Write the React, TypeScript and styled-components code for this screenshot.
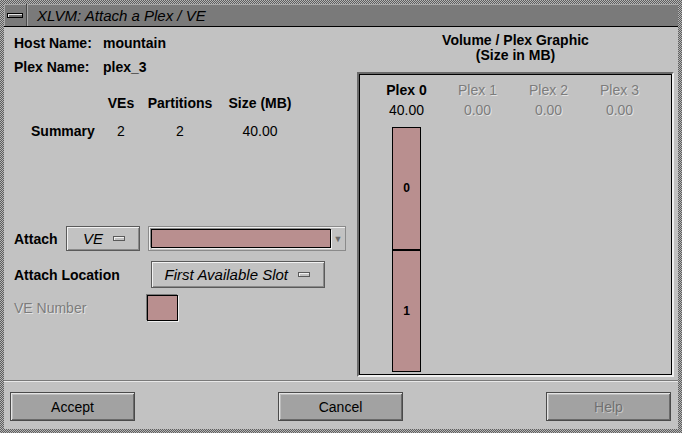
import React from "react";
import styled, { createGlobalStyle } from "styled-components";

const Global = createGlobalStyle`
  html, body { margin: 0; padding: 0; background: #c2c2c2; }
  * { box-sizing: border-box; }
`;

const FONT = `"Liberation Sans", Arial, Helvetica, sans-serif`;
const BG = "#c2c2c2";
const PINK = "#b98f8f";
const DIM = "#7c7c7c";
const DIM_SHADOW = "1px 1px 0 #e2e2e2";

const Frame = styled.div`
  width: 682px;
  height: 433px;
  padding: 4px;
  display: flex;
  flex-direction: column;
  background: repeating-conic-gradient(#5e5e5e 0 25%, #b4b4b4 0 50%) 0 0 / 2px 2px;
  font-family: ${FONT};
`;

const TitleBar = styled.div`
  height: 23px;
  display: flex;
  background: #7a7a7a;
  border-bottom: 1px solid #000;
`;

const MenuButton = styled.div`
  width: 23px;
  display: flex;
  align-items: center;
  justify-content: center;
  border-right: 1px solid #4a4a4a;
  box-shadow: inset 1px 1px 0 #a8a8a8;
`;

const MenuBar = styled.div`
  width: 16px;
  height: 5px;
  background: #6c6c6c;
  border: 1px solid #000;
  box-shadow: inset 1px 1px 0 #e6e6e6;
`;

const TitleText = styled.div`
  flex: 1;
  display: flex;
  align-items: center;
  padding-left: 10px;
  font-size: 15px;
  font-style: italic;
  color: #000;
  box-shadow: inset 1px 1px 0 #a8a8a8;
`;

const Content = styled.div`
  flex: 1;
  display: flex;
  flex-direction: column;
  background: ${BG};
`;

const Main = styled.div`
  height: 353px;
  display: flex;
`;

const LeftPane = styled.div`
  width: 353px;
  padding: 4px 0 0 10px;
  display: flex;
  flex-direction: column;
`;

const InfoRow = styled.div`
  height: 24px;
  display: flex;
  align-items: center;
  font-size: 14px;
  font-weight: bold;
  color: #000;
`;

const InfoLabel = styled.span`
  width: 89px;
`;

const Table = styled.div`
  margin: 12px 0 0 17px;
  display: grid;
  grid-template-columns: 72px 36px 82px 78px;
  grid-auto-rows: 24px;
  row-gap: 4px;
  align-items: center;
  font-size: 14px;
  color: #000;
`;

const Cell = styled.div<{ $bold?: boolean; $left?: boolean }>`
  font-weight: ${(p) => (p.$bold ? "bold" : "normal")};
  text-align: ${(p) => (p.$left ? "left" : "center")};
  white-space: nowrap;
`;

const FormRow = styled.div<{ $top: number; $h: number }>`
  margin-top: ${(p) => p.$top}px;
  height: ${(p) => p.$h}px;
  display: flex;
  align-items: center;
`;

const FormLabel = styled.div<{ $w: number; $disabled?: boolean }>`
  width: ${(p) => p.$w}px;
  font-size: 14px;
  font-weight: ${(p) => (p.$disabled ? "normal" : "bold")};
  color: ${(p) => (p.$disabled ? DIM : "#000")};
  text-shadow: ${(p) => (p.$disabled ? DIM_SHADOW : "none")};
  white-space: nowrap;
`;

const OptionButton = styled.div<{ $w: number }>`
  width: ${(p) => p.$w}px;
  height: 100%;
  display: flex;
  align-items: center;
  justify-content: flex-end;
  gap: 10px;
  padding-right: 14px;
  background: ${BG};
  border: 1px solid #5a5a5a;
  box-shadow: inset 1px 1px 0 #f2f2f2, inset -1px -1px 0 #8a8a8a;
  font-size: 15px;
  font-style: italic;
  color: #000;
  white-space: nowrap;
`;

const Indicator = styled.span`
  width: 12px;
  height: 5px;
  background: ${BG};
  border: 1px solid #5a5a5a;
  box-shadow: inset 1px 1px 0 #f2f2f2;
`;

const Combo = styled.div`
  margin-left: 8px;
  width: 198px;
  height: 100%;
  display: flex;
  align-items: center;
  padding: 2px 0 2px 2px;
  border: 1px solid #8a8a8a;
  box-shadow: inset 1px 1px 0 #f0f0f0;
`;

const PinkField = styled.div`
  width: 180px;
  height: 100%;
  background: ${PINK};
  border: 1px solid #000;
  box-shadow: 1px 1px 0 #f0f0f0, -1px -1px 0 #8a8a8a;
`;

const ComboArrow = styled.div`
  flex: 1;
  display: flex;
  justify-content: center;
  font-size: 9px;
  color: #6a6a6a;
`;

const PinkSquare = styled.div`
  width: 31px;
  height: 26px;
  background: ${PINK};
  border: 1px solid #000;
  box-shadow: 1px 1px 0 #f0f0f0, -1px -1px 0 #7a7a7a;
`;

const RightPane = styled.div`
  flex: 1;
  padding: 6px 4px 3px 0;
  display: flex;
  flex-direction: column;
`;

const GraphTitle = styled.div`
  text-align: center;
  font-size: 14px;
  font-weight: bold;
  line-height: 15px;
  color: #000;
`;

const GraphPanel = styled.div`
  margin-top: 9px;
  flex: 1;
  border: 2px solid;
  border-color: #6a6a6a #f0f0f0 #f0f0f0 #6a6a6a;
  box-shadow: inset 1px 1px 0 #000, inset -1px -1px 0 #000;
  padding: 8px 0 0 12px;
  display: flex;
`;

const PlexColumn = styled.div`
  width: 71px;
  display: flex;
  flex-direction: column;
  align-items: center;
`;

const PlexLabel = styled.div<{ $active?: boolean; $bold?: boolean }>`
  height: 16px;
  line-height: 16px;
  font-size: 14px;
  font-weight: ${(p) => (p.$bold && p.$active ? "bold" : "normal")};
  color: ${(p) => (p.$active ? "#000" : DIM)};
  text-shadow: ${(p) => (p.$active ? "none" : DIM_SHADOW)};
  & + & {
    margin-top: 4px;
  }
`;

const Bar = styled.div`
  margin-top: 9px;
  width: 29px;
  height: 245px;
  display: flex;
  flex-direction: column;
  border: 1px solid #000;
  background: ${PINK};
`;

const Segment = styled.div`
  flex: 1;
  display: flex;
  align-items: center;
  justify-content: center;
  font-size: 12px;
  font-weight: bold;
  color: #000;
  & + & {
    border-top: 2px solid #000;
  }
`;

const Separator = styled.div`
  height: 2px;
  border-top: 1px solid #7a7a7a;
  border-bottom: 1px solid #e8e8e8;
`;

const ButtonBar = styled.div`
  flex: 1;
  display: flex;
  justify-content: space-between;
  align-items: flex-start;
  padding: 10px 7px 0 6px;
`;

const PushButton = styled.div<{ $disabled?: boolean }>`
  width: 125px;
  height: 29px;
  display: flex;
  align-items: center;
  justify-content: center;
  background: #a2a2a2;
  border: 1px solid #4a4a4a;
  box-shadow: inset 1px 1px 0 #e4e4e4, inset -1px -1px 0 #6a6a6a, inset 2px 2px 0 #bcbcbc;
  font-size: 14px;
  color: ${(p) => (p.$disabled ? "#707070" : "#000")};
  text-shadow: ${(p) => (p.$disabled ? "1px 1px 0 #c8c8c8" : "none")};
`;

const plexes = [
  { name: "Plex 0", size: "40.00", active: true },
  { name: "Plex 1", size: "0.00", active: false },
  { name: "Plex 2", size: "0.00", active: false },
  { name: "Plex 3", size: "0.00", active: false },
];

export default function App() {
  return (
    <>
      <Global />
      <Frame>
        <TitleBar>
          <MenuButton>
            <MenuBar />
          </MenuButton>
          <TitleText>XLVM: Attach a Plex / VE</TitleText>
        </TitleBar>
        <Content>
          <Main>
            <LeftPane>
              <InfoRow>
                <InfoLabel>Host Name:</InfoLabel>
                <span>mountain</span>
              </InfoRow>
              <InfoRow>
                <InfoLabel>Plex Name:</InfoLabel>
                <span>plex_3</span>
              </InfoRow>
              <Table>
                <Cell />
                <Cell $bold>VEs</Cell>
                <Cell $bold>Partitions</Cell>
                <Cell $bold>Size (MB)</Cell>
                <Cell $bold $left>Summary</Cell>
                <Cell>2</Cell>
                <Cell>2</Cell>
                <Cell>40.00</Cell>
              </Table>
              <FormRow $top={83} $h={25}>
                <FormLabel $w={52}>Attach</FormLabel>
                <OptionButton $w={74}>
                  VE <Indicator />
                </OptionButton>
                <Combo>
                  <PinkField />
                  <ComboArrow>▼</ComboArrow>
                </Combo>
              </FormRow>
              <FormRow $top={10} $h={27}>
                <FormLabel $w={137}>Attach Location</FormLabel>
                <OptionButton $w={174}>
                  First Available Slot <Indicator />
                </OptionButton>
              </FormRow>
              <FormRow $top={7} $h={26}>
                <FormLabel $w={133} $disabled>
                  VE Number
                </FormLabel>
                <PinkSquare />
              </FormRow>
            </LeftPane>
            <RightPane>
              <GraphTitle>
                Volume / Plex Graphic
                <br />
                (Size in MB)
              </GraphTitle>
              <GraphPanel>
                {plexes.map((p) => (
                  <PlexColumn key={p.name}>
                    <PlexLabel $active={p.active} $bold>
                      {p.name}
                    </PlexLabel>
                    <PlexLabel $active={p.active}>{p.size}</PlexLabel>
                    {p.active && (
                      <Bar>
                        <Segment>0</Segment>
                        <Segment>1</Segment>
                      </Bar>
                    )}
                  </PlexColumn>
                ))}
              </GraphPanel>
            </RightPane>
          </Main>
          <Separator />
          <ButtonBar>
            <PushButton>Accept</PushButton>
            <PushButton>Cancel</PushButton>
            <PushButton $disabled>Help</PushButton>
          </ButtonBar>
        </Content>
      </Frame>
    </>
  );
}
